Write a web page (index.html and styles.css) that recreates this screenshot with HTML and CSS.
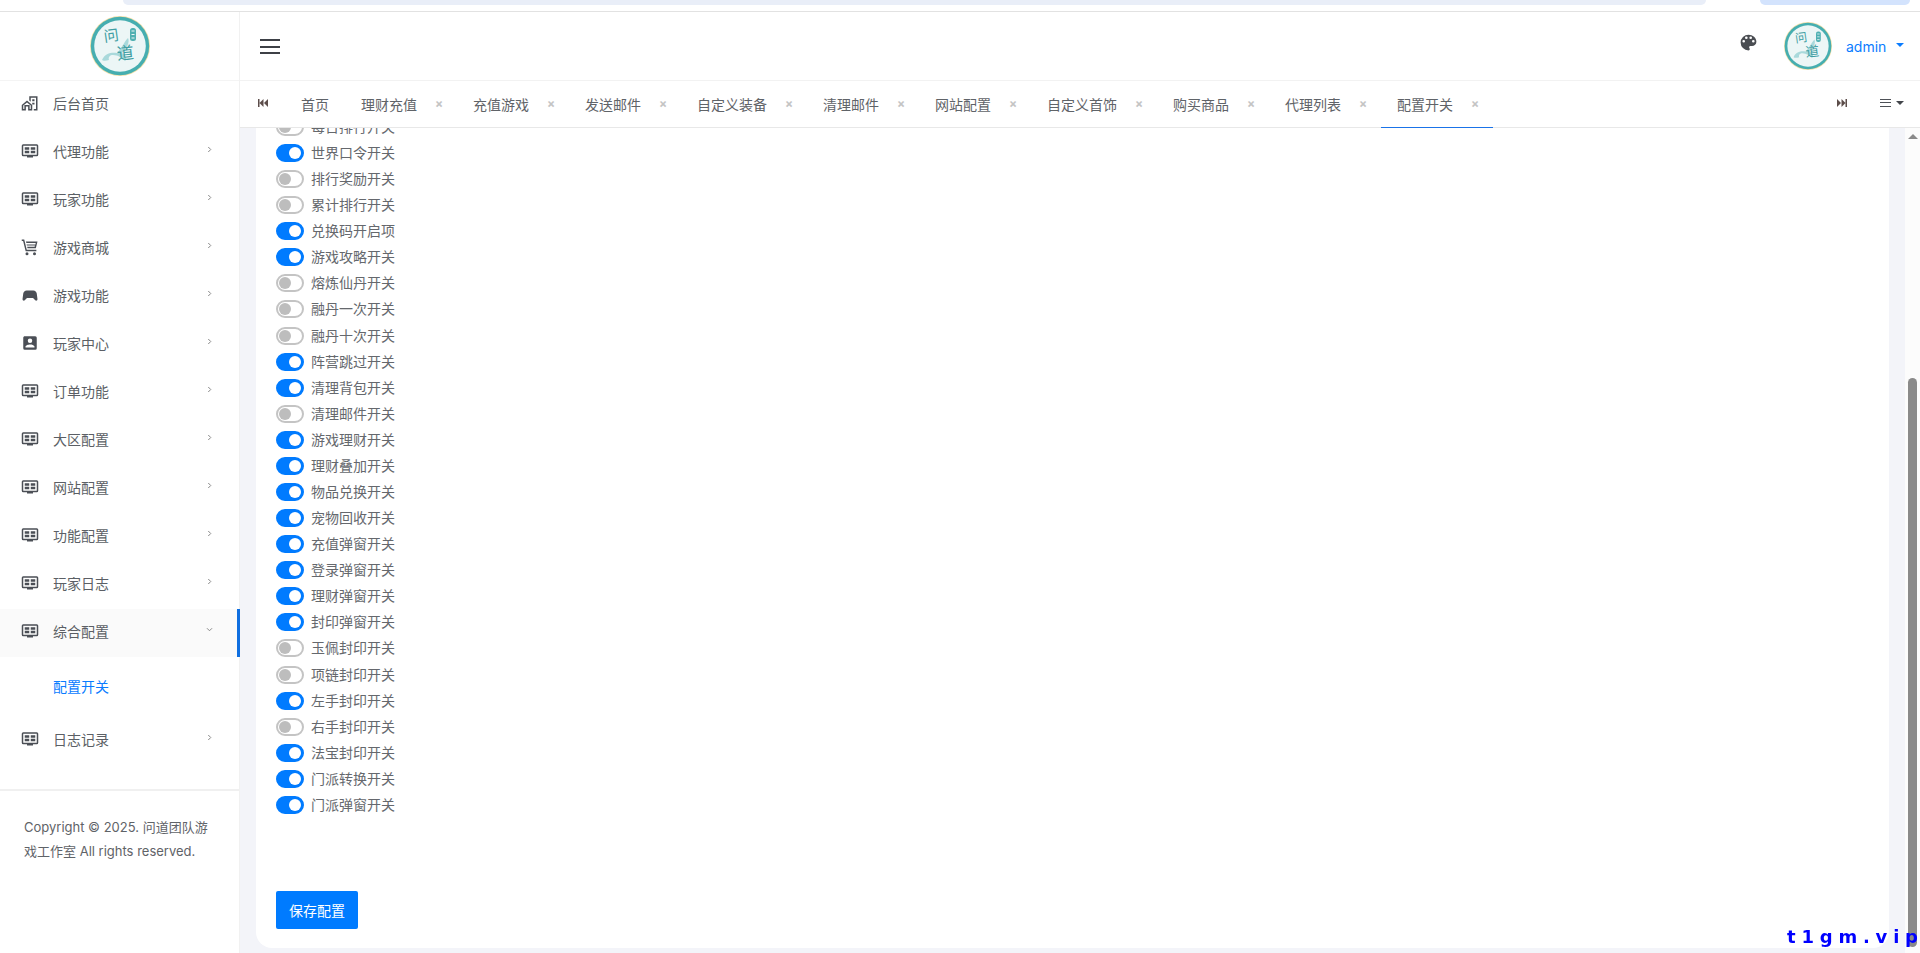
FILE: index.html
```html
<!DOCTYPE html>
<html lang="zh-CN">
<head>
<meta charset="utf-8">
<title>配置开关</title>
<link rel="stylesheet" href="styles.css">
</head>
<body>
<svg class="defs" aria-hidden="true">
  <symbol id="i-logo" viewBox="0 0 60 60">
    <circle cx="30" cy="30" r="30" fill="#f3dfa8"/>
    <circle cx="30" cy="30" r="29.2" fill="#46aeb0"/>
    <circle cx="30" cy="30" r="25.8" fill="#ecf6f6"/>
    <path d="M12 44c3-7 10-8 15-7 5-5 7-11 11-15 2 4-1 10-6 15 3 2 6 6 3 8-3-3-7-6-12-6-3 0-5 2-4 5-3 1-6 1-7 0z" fill="#a9d9db"/>
    <text x="22" y="25" class="logo-ink" font-size="15" transform="rotate(-8 22 25)">问</text>
    <text x="36" y="43" class="logo-ink" font-size="17" transform="rotate(-6 36 43)">道</text>
    <rect x="40" y="12" width="6" height="13" rx="2.5" fill="#4fb0b2"/>
    <path d="M41.5 15h3M41.5 18.500h3M41.500 22h3" stroke="#ecf6f6" stroke-width="1"/>
  </symbol>
  <symbol id="i-dash" viewBox="0 0 24 24">
    <path fill-rule="evenodd" d="M3 3h18a2 2 0 0 1 2 2v12a2 2 0 0 1-2 2h-5v1.500H8V19H3a2 2 0 0 1-2-2V5a2 2 0 0 1 2-2zm0 2v12h18V5H3zm2 2h6v3.200H5V7zm8 0h6v3.200h-6V7zm-8 4.800h6V15H5v-3.200zm8 0h6V15h-6v-3.200z"/>
  </symbol>
  <symbol id="i-home" viewBox="0 0 24 24">
    <path d="M8 8.500 1 14.500V22h5.500v-5.500h3V22H15v-7.500L8 8.500zm0 2.700 5 4.200V20h-1.500v-5.500h-7V20H3v-4.600l5-4.200zM11 3v5.700l2 1.700V5h7v15h-3v2h5V3H11zm4 4h3v2.500h-3V7zm0 4.500h3V14h-3v-2.500z"/>
  </symbol>
  <symbol id="i-cart" viewBox="0 0 24 24">
    <path d="M1 2h3.300l3.400 13.500h12.800v2H6.200L2.800 4H1V2zm5.500 2.500H22l-2.200 9H8.700l-.5-2h10l.4-1.500H7.800l-.4-1.500h11.800l.4-2H7.200l-.7-2zM8 19a2 2 0 1 1 0 4 2 2 0 0 1 0-4zm10 0a2 2 0 1 1 0 4 2 2 0 0 1 0-4z"/>
  </symbol>
  <symbol id="i-game" viewBox="0 0 24 24">
    <path d="M7.970 16 5 19c-.33.3-.77.5-1.250.5A1.750 1.750 0 0 1 2 17.750V17.500l1-7.380C3.210 7.810 5.140 6 7.500 6h9c2.360 0 4.290 1.810 4.500 4.120l1 7.380v.25a1.750 1.750 0 0 1-1.750 1.750c-.48 0-.92-.2-1.250-.5l-2.970-3H7.970z"/>
  </symbol>
  <symbol id="i-user" viewBox="0 0 24 24">
    <path d="M6 17c0-2 4-3 6-3s6 1 6 3v1H6m9-9a3 3 0 0 1-3 3 3 3 0 0 1-3-3 3 3 0 0 1 3-3 3 3 0 0 1 3 3M3 5v14a2 2 0 0 0 2 2h14a2 2 0 0 0 2-2V5a2 2 0 0 0-2-2H5c-1.110 0-2 .9-2 2z"/>
  </symbol>
  <symbol id="i-palette" viewBox="0 0 24 24">
    <path d="M17.500 12a1.500 1.500 0 0 1-1.500-1.500A1.500 1.500 0 0 1 17.500 9a1.500 1.500 0 0 1 1.500 1.500 1.500 1.500 0 0 1-1.500 1.500m-3-4A1.500 1.500 0 0 1 13 6.500 1.500 1.500 0 0 1 14.500 5 1.500 1.500 0 0 1 16 6.500 1.500 1.500 0 0 1 14.500 8m-5 0A1.500 1.500 0 0 1 8 6.500 1.500 1.500 0 0 1 9.500 5 1.500 1.500 0 0 1 11 6.500 1.500 1.500 0 0 1 9.500 8m-3 4A1.500 1.500 0 0 1 5 10.500 1.500 1.500 0 0 1 6.500 9 1.500 1.500 0 0 1 8 10.500 1.500 1.500 0 0 1 6.500 12M12 3a9 9 0 0 0-9 9 9 9 0 0 0 9 9 1.500 1.500 0 0 0 1.500-1.500c0-.39-.15-.74-.39-1-.23-.27-.38-.62-.38-1a1.500 1.500 0 0 1 1.500-1.500H16a5 5 0 0 0 5-5c0-4.420-4.030-8-9-8z"/>
  </symbol>
  <symbol id="i-right" viewBox="0 0 6 8"><path d="M1.500 1 4.500 4l-3 3" fill="none" stroke="currentColor" stroke-width="1.200"/></symbol>
  <symbol id="i-down" viewBox="0 0 8 6"><path d="M1 1.500 4 4.500l3-3" fill="none" stroke="currentColor" stroke-width="1.200"/></symbol>
  <symbol id="i-first" viewBox="0 0 10 8"><path d="M0 0h1.500v8H0zM5.500 0v8L1.500 4zM10 0v8L6 4z"/></symbol>
  <symbol id="i-last" viewBox="0 0 10 8"><path d="M10 0H8.500v8H10zM4.500 0v8l4-4zM0 0v8l4-4z"/></symbol>
</svg>

<div class="chrome">
  <span class="chrome-pill chrome-pill-wide"></span>
  <span class="chrome-pill chrome-pill-blue"></span>
</div>

<div class="app">
  <aside class="sidebar">
    <div class="brand"><svg class="brand-logo"><use href="#i-logo"/></svg></div>
    <nav class="nav">
      <a class="nav-item"><svg class="nav-icon"><use href="#i-home"/></svg><span class="nav-text">后台首页</span></a>
      <a class="nav-item"><svg class="nav-icon"><use href="#i-dash"/></svg><span class="nav-text">代理功能</span><svg class="nav-chev"><use href="#i-right"/></svg></a>
      <a class="nav-item"><svg class="nav-icon"><use href="#i-dash"/></svg><span class="nav-text">玩家功能</span><svg class="nav-chev"><use href="#i-right"/></svg></a>
      <a class="nav-item"><svg class="nav-icon"><use href="#i-cart"/></svg><span class="nav-text">游戏商城</span><svg class="nav-chev"><use href="#i-right"/></svg></a>
      <a class="nav-item"><svg class="nav-icon"><use href="#i-game"/></svg><span class="nav-text">游戏功能</span><svg class="nav-chev"><use href="#i-right"/></svg></a>
      <a class="nav-item"><svg class="nav-icon"><use href="#i-user"/></svg><span class="nav-text">玩家中心</span><svg class="nav-chev"><use href="#i-right"/></svg></a>
      <a class="nav-item"><svg class="nav-icon"><use href="#i-dash"/></svg><span class="nav-text">订单功能</span><svg class="nav-chev"><use href="#i-right"/></svg></a>
      <a class="nav-item"><svg class="nav-icon"><use href="#i-dash"/></svg><span class="nav-text">大区配置</span><svg class="nav-chev"><use href="#i-right"/></svg></a>
      <a class="nav-item"><svg class="nav-icon"><use href="#i-dash"/></svg><span class="nav-text">网站配置</span><svg class="nav-chev"><use href="#i-right"/></svg></a>
      <a class="nav-item"><svg class="nav-icon"><use href="#i-dash"/></svg><span class="nav-text">功能配置</span><svg class="nav-chev"><use href="#i-right"/></svg></a>
      <a class="nav-item"><svg class="nav-icon"><use href="#i-dash"/></svg><span class="nav-text">玩家日志</span><svg class="nav-chev"><use href="#i-right"/></svg></a>
      <a class="nav-item nav-item-open"><svg class="nav-icon"><use href="#i-dash"/></svg><span class="nav-text">综合配置</span><svg class="nav-chev"><use href="#i-down"/></svg></a>
      <a class="nav-sub">配置开关</a>
      <a class="nav-item"><svg class="nav-icon"><use href="#i-dash"/></svg><span class="nav-text">日志记录</span><svg class="nav-chev"><use href="#i-right"/></svg></a>
    </nav>
    <p class="copyright">Copyright © 2025. 问道团队游戏工作室 All rights reserved.</p>
  </aside>

  <div class="main">
    <header class="topbar">
      <button class="burger" aria-label="菜单"><span></span><span></span><span></span></button>
      <div class="topbar-right">
        <svg class="palette"><use href="#i-palette"/></svg>
        <svg class="avatar"><use href="#i-logo"/></svg>
        <span class="username">admin</span>
        <span class="caret caret-blue"></span>
      </div>
    </header>

    <div class="tabbar">
      <span class="tab-nav tab-nav-first"><svg class="tab-skip"><use href="#i-first"/></svg></span>
      <div class="tabs">
        <a class="tab">首页</a>
        <a class="tab">理财充值<i class="tab-close">×</i></a>
        <a class="tab">充值游戏<i class="tab-close">×</i></a>
        <a class="tab">发送邮件<i class="tab-close">×</i></a>
        <a class="tab">自定义装备<i class="tab-close">×</i></a>
        <a class="tab">清理邮件<i class="tab-close">×</i></a>
        <a class="tab">网站配置<i class="tab-close">×</i></a>
        <a class="tab">自定义首饰<i class="tab-close">×</i></a>
        <a class="tab">购买商品<i class="tab-close">×</i></a>
        <a class="tab">代理列表<i class="tab-close">×</i></a>
        <a class="tab tab-active">配置开关<i class="tab-close">×</i></a>
      </div>
      <span class="tab-nav tab-nav-last"><svg class="tab-skip"><use href="#i-last"/></svg></span>
      <span class="tab-menu"><span class="tab-lines"><span></span><span></span><span></span></span><span class="caret caret-dark"></span></span>
    </div>

    <div class="content-wrap">
      <main class="content">
        <section class="card">
          <div class="switches">
            <label class="row"><span class="switch"></span>每日排行开关</label>
            <label class="row"><span class="switch on"></span>世界口令开关</label>
            <label class="row"><span class="switch"></span>排行奖励开关</label>
            <label class="row"><span class="switch"></span>累计排行开关</label>
            <label class="row"><span class="switch on"></span>兑换码开启项</label>
            <label class="row"><span class="switch on"></span>游戏攻略开关</label>
            <label class="row"><span class="switch"></span>熔炼仙丹开关</label>
            <label class="row"><span class="switch"></span>融丹一次开关</label>
            <label class="row"><span class="switch"></span>融丹十次开关</label>
            <label class="row"><span class="switch on"></span>阵营跳过开关</label>
            <label class="row"><span class="switch on"></span>清理背包开关</label>
            <label class="row"><span class="switch"></span>清理邮件开关</label>
            <label class="row"><span class="switch on"></span>游戏理财开关</label>
            <label class="row"><span class="switch on"></span>理财叠加开关</label>
            <label class="row"><span class="switch on"></span>物品兑换开关</label>
            <label class="row"><span class="switch on"></span>宠物回收开关</label>
            <label class="row"><span class="switch on"></span>充值弹窗开关</label>
            <label class="row"><span class="switch on"></span>登录弹窗开关</label>
            <label class="row"><span class="switch on"></span>理财弹窗开关</label>
            <label class="row"><span class="switch on"></span>封印弹窗开关</label>
            <label class="row"><span class="switch"></span>玉佩封印开关</label>
            <label class="row"><span class="switch"></span>项链封印开关</label>
            <label class="row"><span class="switch on"></span>左手封印开关</label>
            <label class="row"><span class="switch"></span>右手封印开关</label>
            <label class="row"><span class="switch on"></span>法宝封印开关</label>
            <label class="row"><span class="switch on"></span>门派转换开关</label>
            <label class="row"><span class="switch on"></span>门派弹窗开关</label>
          </div>
          <button class="save">保存配置</button>
        </section>
      </main>
      <div class="scrollbar">
        <span class="scroll-up"></span>
        <span class="scroll-thumb"></span>
      </div>
    </div>
  </div>
</div>

<div class="watermark">t1gm.vi<span class="watermark-end">p</span></div>
</body>
</html>
```

FILE: styles.css
```css
* { box-sizing: border-box; }

html, body {
  margin: 0;
  height: 100%;
  overflow: hidden;
}

body {
  display: flex;
  flex-direction: column;
  background: #fff;
  color: #5b5f65;
  font-family: Inter, "Noto Sans CJK SC", sans-serif;
  font-size: 14px;
}

.defs { display: none; }

.logo-ink {
  fill: #3f9ea3;
  font-family: "Noto Sans CJK SC", sans-serif;
  font-weight: 400;
  text-anchor: middle;
}

/* browser strip at the very top */
.chrome {
  flex: none;
  height: 12px;
  padding-left: 123px;
  display: flex;
  align-items: flex-start;
  gap: 54px;
  border-bottom: 1px solid #e2e2e2;
}

.chrome-pill {
  height: 5px;
  border-radius: 0 0 14px 14px;
}
.chrome-pill-wide { width: 1583px; background: #e9eef8; }
.chrome-pill-blue { width: 150px; background: #d3e3fd; }

.app {
  flex: 1;
  min-height: 0;
  display: flex;
}

/* sidebar */
.sidebar {
  flex: none;
  width: 240px;
  background: #fff;
  border-right: 1px solid #f1f1f1;
}

.brand {
  height: 69px;
  display: flex;
  align-items: flex-start;
  justify-content: center;
  padding-top: 4px;
  border-bottom: 1px solid #f4f4f4;
}

.brand-logo { width: 60px; height: 60px; }

.nav {
  padding-bottom: 24px;
  border-bottom: 2px solid #f0f0f0;
}

.nav-item {
  height: 48px;
  margin-right: -1px;
  padding: 0 28px 4px 21px;
  display: flex;
  align-items: center;
}

.nav-item-open {
  background: #fafafa;
  border-right: 3px solid #0f6fe0;
  padding-right: 25px;
}

.nav-icon {
  flex: none;
  width: 18px;
  height: 18px;
  margin-right: 14px;
  fill: #4b4f56;
}

.nav-text { flex: 1; }

.nav-chev {
  flex: none;
  width: 5px;
  height: 7px;
  margin-top: -3px;
  color: #888;
}

.nav-item-open .nav-chev { width: 7px; height: 5px; margin-right: -1px; }

.nav-sub {
  display: flex;
  align-items: center;
  height: 60px;
  padding: 0 0 2px 53px;
  color: #0a7cff;
}

.copyright {
  margin: 0;
  padding: 24px;
  font-size: 13px;
  line-height: 24px;
  color: #5f6368;
}

/* main column */
.main {
  flex: 1;
  min-width: 0;
  display: flex;
  flex-direction: column;
}

.topbar {
  flex: none;
  height: 69px;
  padding: 0 16px 0 20px;
  display: flex;
  align-items: center;
  justify-content: space-between;
  border-bottom: 1px solid #f2f2f2;
}

.burger {
  width: 20px;
  height: 15px;
  padding: 0;
  margin-top: 1px;
  border: 0;
  background: none;
  display: flex;
  flex-direction: column;
  justify-content: space-between;
}

.burger span {
  display: block;
  height: 2px;
  background: #3d4046;
}

.topbar-right {
  display: flex;
  align-items: center;
}

.palette {
  width: 21px;
  height: 21px;
  margin: -7px 25px 0 0;
  fill: #4a4d52;
}

.avatar { width: 48px; height: 48px; }

.username {
  width: 42px;
  margin-left: 14px;
  color: #0a7cff;
}

.caret {
  display: block;
  width: 0;
  height: 0;
  border-left: 4px solid transparent;
  border-right: 4px solid transparent;
  border-top: 4px solid #000;
}

.caret-blue { margin: -3px 0 0 8px; border-top-color: #0a7cff; }
.caret-dark { margin-left: 5px; border-top-color: #43464b; }

/* tabs */
.tabbar {
  flex: none;
  height: 47px;
  display: flex;
  align-items: stretch;
  border-bottom: 1px solid #e8e8e8;
}

.tab-nav {
  flex: none;
  display: flex;
  align-items: center;
}

.tab-nav-first { width: 45px; padding-left: 18px; }
.tab-nav-last { width: 43px; margin-left: auto; }

.tab-skip {
  width: 10px;
  height: 8px;
  margin-top: -3px;
  fill: #5c4d4a;
}

.tabs {
  display: flex;
  margin-bottom: -1px;
}

.tab {
  display: flex;
  align-items: center;
  padding: 0 16px;
  border-bottom: 1px solid transparent;
  white-space: nowrap;
  color: #5f6368;
}

.tab-active { border-bottom-color: #1a73e8; }

.tab-close {
  width: 8px;
  margin: 0 -2px 0 18px;
  font-style: normal;
  font-size: 12px;
  font-weight: 700;
  line-height: 1;
  text-align: center;
  color: #c4c4c4;
}

.tab-menu {
  flex: none;
  width: 40px;
  display: flex;
  align-items: center;
  margin-top: -3px;
}

.tab-lines {
  width: 11px;
  height: 8px;
  display: flex;
  flex-direction: column;
  justify-content: space-between;
}

.tab-lines span {
  display: block;
  height: 1px;
  background: #4e5157;
}

/* content */
.content-wrap {
  flex: 1;
  min-height: 0;
  display: flex;
  background: #f3f4f9;
}

.content {
  flex: 1;
  min-width: 0;
  overflow: hidden;
  display: flex;
  flex-direction: column;
  justify-content: flex-end;
  padding: 0 16px 5px 16px;
}

.card {
  flex: none;
  padding: 0 20px 19px;
  background: #fff;
  border-radius: 0 0 16px 16px;
}

.switches { margin-bottom: 74px; }

.row {
  display: flex;
  align-items: center;
  height: 26.08px;
  color: #65686d;
}

.switch {
  position: relative;
  flex: none;
  width: 28px;
  height: 18px;
  margin: 2px 7px 0 0;
  border: 2px solid #c4c4c4;
  border-radius: 9px;
  background: #fff;
}

.switch::after {
  content: "";
  position: absolute;
  top: 1px;
  left: 1px;
  width: 12px;
  height: 12px;
  border-radius: 50%;
  background: #bdbdbd;
}

.switch.on {
  background: #007bff;
  border-color: #007bff;
}

.switch.on::after {
  left: 11px;
  background: #fff;
}

.save {
  display: block;
  width: 82px;
  height: 38px;
  padding: 0;
  border: 0;
  border-radius: 2px;
  background: #007bff;
  color: #fff;
  font: inherit;
}

/* page scrollbar */
.scrollbar {
  flex: none;
  width: 15px;
  padding: 6px 3px 6px;
  display: flex;
  flex-direction: column;
  justify-content: space-between;
  align-items: center;
  background: #fcfcfc;
}

.scroll-up {
  width: 0;
  height: 0;
  border-left: 5px solid transparent;
  border-right: 5px solid transparent;
  border-bottom: 5px solid #8a8a8a;
}

.scroll-thumb {
  width: 9px;
  height: 569px;
  border-radius: 5px;
  background: #8a8a8a;
}

/* overlay watermark */
.watermark {
  position: fixed;
  right: 2px;
  bottom: 6px;
  font-family: "DejaVu Sans", sans-serif;
  font-size: 18px;
  font-weight: 700;
  letter-spacing: 5.800px;
  color: #0000ff;
  line-height: 20px;
}

.watermark-end { letter-spacing: 0; }
```
